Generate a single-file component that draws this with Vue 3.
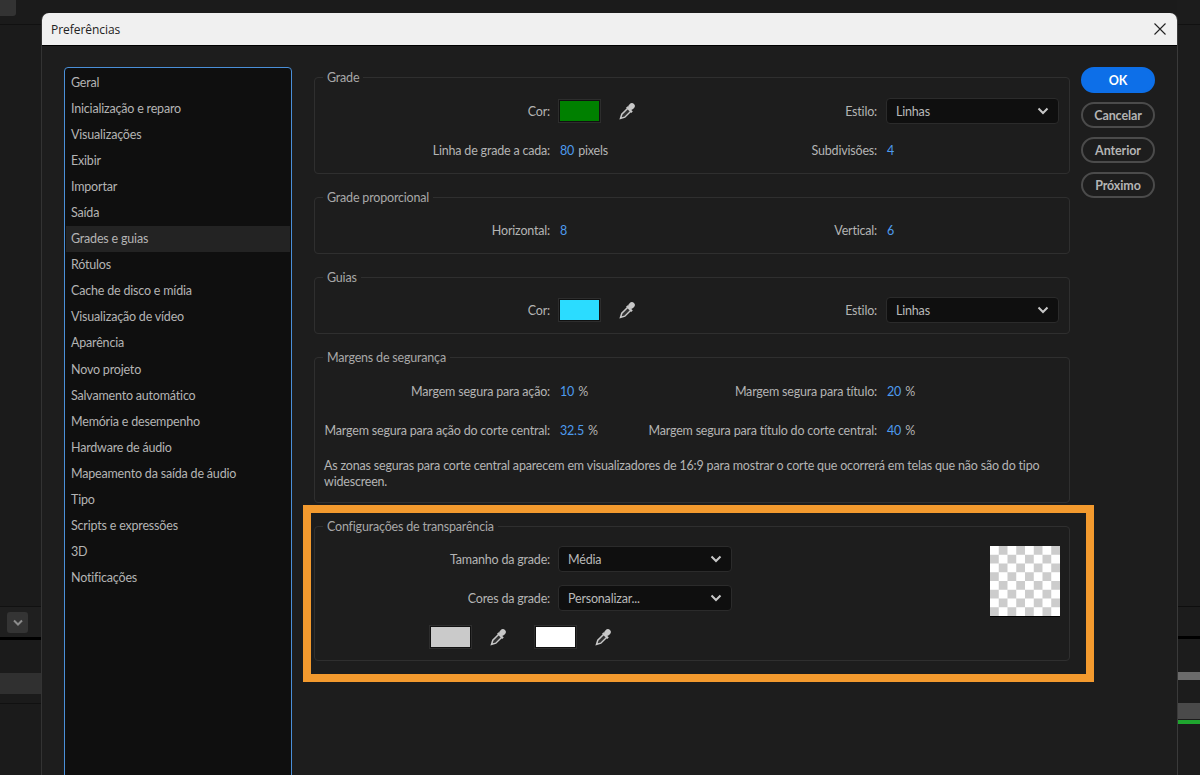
<script setup>
const navItems = ['Geral','Inicialização e reparo','Visualizações','Exibir','Importar','Saída','Grades e guias','Rótulos','Cache de disco e mídia','Visualização de vídeo','Aparência','Novo projeto','Salvamento automático','Memória e desempenho','Hardware de áudio','Mapeamento da saída de áudio','Tipo','Scripts e expressões','3D','Notificações']
const buttons = ['Cancelar','Anterior','Próximo']
</script>

<template>
  <div class="stage">
    <div class="bg-left">
      <div class="bg-corner"></div>
      <div class="bg-line-top"></div>
      <div class="bg-bar"><span class="bg-chevron"><svg width="12" height="8" viewBox="0 0 12 8"><path d="M2 1.500 6 5.500 10 1.500" fill="none" stroke="#8c8c8c" stroke-width="2"/></svg></span></div>
      <div class="bg-band"></div>
      <div class="bg-rule"></div>
    </div>
    <div class="bg-right">
      <div class="bg-line-top"></div>
      <div class="r-line"></div>
      <div class="r-black"></div>
      <div class="r-gray"></div>
      <div class="r-gray2"></div>
      <div class="r-green"></div>
    </div>

    <div class="dialog">
      <header class="titlebar">
        <span class="title">Preferências</span>
        <svg class="close" width="12" height="12" viewBox="0 0 12 12"><path d="M.5.5l11 11M11.5.5l-11 11" stroke="#222" stroke-width="1.1" fill="none"/></svg>
      </header>

      <div class="body">
        <nav class="nav">
          <div v-for="item in navItems" :key="item" class="nav-item" :class="{ selected: item === 'Grades e guias' }">{{ item }}</div>
        </nav>

        <main class="main">
          <section class="group g-grade">
            <h3 class="legend">Grade</h3>
            <div class="row row-a">
              <label class="lbl">Cor:</label>
              <div class="ctrl">
                <span class="swatch green"></span>
                <svg class="drop" width="16" height="18" viewBox="0 0 16 18"><path d="M8.800 6.200 2.800 12.200 1.500 16.500 5.800 15.200 11.800 9.200" fill="#333" stroke="#c8c8c8" stroke-width="1.500"/><path d="M7.800 5 13 10.200" stroke="#c8c8c8" stroke-width="2.200"/><ellipse cx="12.500" cy="4.500" rx="3" ry="3.500" transform="rotate(45 12.500 4.500)" fill="#c8c8c8"/></svg>
              </div>
              <label class="lbl">Estilo:</label>
              <div class="select"><span>Linhas</span><svg width="12" height="8" viewBox="0 0 12 8"><path d="M1.500 1.500 6 6l4.500-4.500" fill="none" stroke="#c8c8c8" stroke-width="2"/></svg></div>
            </div>
            <div class="row row-b">
              <label class="lbl">Linha de grade a cada:</label>
              <div class="ctrl val"><b>80</b> pixels</div>
              <label class="lbl">Subdivisões:</label>
              <div class="ctrl val"><b>4</b></div>
            </div>
          </section>

          <section class="group g-prop">
            <h3 class="legend">Grade proporcional</h3>
            <div class="row">
              <label class="lbl">Horizontal:</label>
              <div class="ctrl val"><b>8</b></div>
              <label class="lbl">Vertical:</label>
              <div class="ctrl val"><b>6</b></div>
            </div>
          </section>

          <section class="group g-guias">
            <h3 class="legend">Guias</h3>
            <div class="row">
              <label class="lbl">Cor:</label>
              <div class="ctrl">
                <span class="swatch cyan"></span>
                <svg class="drop" width="16" height="18" viewBox="0 0 16 18"><path d="M8.800 6.200 2.800 12.200 1.500 16.500 5.800 15.200 11.800 9.200" fill="#333" stroke="#c8c8c8" stroke-width="1.500"/><path d="M7.800 5 13 10.200" stroke="#c8c8c8" stroke-width="2.200"/><ellipse cx="12.500" cy="4.500" rx="3" ry="3.500" transform="rotate(45 12.500 4.500)" fill="#c8c8c8"/></svg>
              </div>
              <label class="lbl">Estilo:</label>
              <div class="select"><span>Linhas</span><svg width="12" height="8" viewBox="0 0 12 8"><path d="M1.500 1.500 6 6l4.500-4.500" fill="none" stroke="#c8c8c8" stroke-width="2"/></svg></div>
            </div>
          </section>

          <section class="group g-marg">
            <h3 class="legend">Margens de segurança</h3>
            <div class="row row-m1">
              <label class="lbl">Margem segura para ação:</label>
              <div class="ctrl val"><b>10</b> %</div>
              <label class="lbl">Margem segura para título:</label>
              <div class="ctrl val"><b>20</b> %</div>
            </div>
            <div class="row row-m2">
              <label class="lbl">Margem segura para ação do corte central:</label>
              <div class="ctrl val"><b>32.5</b> %</div>
              <label class="lbl">Margem segura para título do corte central:</label>
              <div class="ctrl val"><b>40</b> %</div>
            </div>
            <p class="note">As zonas seguras para corte central aparecem em visualizadores de 16:9 para mostrar o corte que ocorrerá em telas que não são do tipo widescreen.</p>
          </section>

          <section class="group g-trans">
            <h3 class="legend">Configurações de transparência</h3>
            <div class="trans-grid">
              <div class="trans-fields">
                <div class="t-row">
                  <label class="lbl">Tamanho da grade:</label>
                  <div class="select"><span>Média</span><svg width="12" height="8" viewBox="0 0 12 8"><path d="M1.500 1.500 6 6l4.500-4.500" fill="none" stroke="#c8c8c8" stroke-width="2"/></svg></div>
                </div>
                <div class="t-row">
                  <label class="lbl">Cores da grade:</label>
                  <div class="select"><span>Personalizar...</span><svg width="12" height="8" viewBox="0 0 12 8"><path d="M1.500 1.500 6 6l4.500-4.500" fill="none" stroke="#c8c8c8" stroke-width="2"/></svg></div>
                </div>
                <div class="t-swatches">
                  <span class="swatch light"></span>
                  <svg class="drop" width="16" height="18" viewBox="0 0 16 18"><path d="M8.800 6.200 2.800 12.200 1.500 16.500 5.800 15.200 11.800 9.200" fill="#333" stroke="#c8c8c8" stroke-width="1.500"/><path d="M7.800 5 13 10.200" stroke="#c8c8c8" stroke-width="2.200"/><ellipse cx="12.500" cy="4.500" rx="3" ry="3.500" transform="rotate(45 12.500 4.500)" fill="#c8c8c8"/></svg>
                  <span class="swatch white"></span>
                  <svg class="drop" width="16" height="18" viewBox="0 0 16 18"><path d="M8.800 6.200 2.800 12.200 1.500 16.500 5.800 15.200 11.800 9.200" fill="#333" stroke="#c8c8c8" stroke-width="1.500"/><path d="M7.800 5 13 10.200" stroke="#c8c8c8" stroke-width="2.200"/><ellipse cx="12.500" cy="4.500" rx="3" ry="3.500" transform="rotate(45 12.500 4.500)" fill="#c8c8c8"/></svg>
                </div>
              </div>
              <div class="checker"></div>
            </div>
          </section>

          <div class="highlight"></div>
        </main>

        <aside class="actions">
          <button class="btn primary">OK</button>
          <button v-for="b in buttons" :key="b" class="btn">{{ b }}</button>
        </aside>
      </div>
    </div>
  </div>
</template>

<style>
html, body { margin: 0; background: #1b1b1b; }
</style>

<style scoped>
.stage {
  position: relative;
  width: 1200px;
  height: 775px;
  overflow: hidden;
  box-sizing: border-box;
  padding: 13px 23px 0 42px;
  background: #1b1b1b;
  font-family: Lato, "Open Sans", sans-serif;
  font-size: 12.5px;
  letter-spacing: -0.19px;
  color: #b4b4b4;
}
.bg-left, .bg-right { position: absolute; top: 0; bottom: 0; }
.bg-left { left: 0; width: 42px; }
.bg-right { right: 0; width: 23px; background: #1c1c1c; }
.bg-corner { position: absolute; left: 0; top: 0; width: 16px; height: 16px; background: #333; border-radius: 0 0 3px 0; }
.bg-line-top { position: absolute; left: 0; right: 0; top: 24px; height: 1px; background: #111; }
.bg-bar { position: absolute; left: 0; right: 0; top: 606px; height: 30px; background: #1f1f1f; border-top: 1px solid #111; border-bottom: 3px solid #000; }
.bg-chevron { position: absolute; left: 7px; top: 5px; width: 21px; height: 21px; display: flex; align-items: center; justify-content: center; background: #343434; border-radius: 3px; }
.bg-band { position: absolute; left: 0; right: 0; top: 673px; height: 21px; background: #303030; }
.bg-rule { position: absolute; left: 0; right: 0; top: 703px; height: 1px; background: #111; }
.r-line { position: absolute; left: 0; right: 0; top: 606px; height: 1px; background: #0e0e0e; }
.r-black { position: absolute; left: 0; right: 0; top: 636px; height: 3px; background: #000; }
.r-gray { position: absolute; left: 0; right: 0; top: 672px; height: 8px; background: #6b6b6b; }
.r-gray2 { position: absolute; left: 0; right: 0; top: 703px; height: 16px; background: #4a4a4a; }
.r-green { position: absolute; left: 0; right: 0; top: 720px; height: 4px; background: #1fa52f; }

.dialog {
  position: relative;
  height: 100%;
  display: flex;
  flex-direction: column;
  background: #1d1d1d;
  box-shadow: 1px 0 0 #3a3a3a, -1px 0 0 #333;
  border-radius: 7px 7px 0 0;
}
.titlebar {
  flex: none;
  height: 33px;
  display: flex;
  align-items: center;
  justify-content: space-between;
  padding: 0 11px 0 9px;
  background: #f0f0f0;
  border-radius: 7px 7px 0 0;
  border-bottom: 1px solid #000;
  box-sizing: border-box;
}
.title { font-family: "Open Sans", sans-serif; font-size: 12px; letter-spacing: -0.05px; color: #222; }
.body {
  flex: 1;
  min-height: 0;
  display: flex;
  align-items: flex-start;
  padding: 21px 0 0 22px;
}
.nav {
  flex: none;
  width: 228px;
  height: 720px;
  box-sizing: border-box;
  padding-top: 2px;
  background: #0f0f0f;
  border: 1px solid #4a8fd8;
  border-radius: 4px 4px 0 0;
}
.nav-item {
  height: 26.05px;
  line-height: 26px;
  padding-left: 5px;
  margin: 0 1px;
  white-space: nowrap;
}
.nav-item.selected { background: #232323; }

.main {
  position: relative;
  flex: none;
  width: 756px;
  margin: 10px 0 0 22px;
  display: flex;
  flex-direction: column;
  gap: 23px;
}
.group {
  position: relative;
  box-sizing: border-box;
  border: 1px solid #2f2f2f;
  border-radius: 4px;
}
.legend {
  position: absolute;
  left: 8px;
  top: -8px;
  margin: 0;
  padding: 0 4px;
  background: #1d1d1d;
  font-size: 12.5px;
  line-height: 16px;
  font-weight: 400;
  color: #a8a8a8;
}
.g-grade { height: 97px; padding-top: 20px; }
.g-prop { height: 57px; padding-top: 20px; }
.g-guias { height: 57px; padding-top: 19px; }
.g-marg { height: 146px; padding-top: 21px; }
.g-trans { height: 135px; }

.row {
  display: grid;
  grid-template-columns: 235px 141px 168px 173px;
  column-gap: 9px;
  align-items: center;
  height: 25px;
  line-height: 25px;
}
.row-b { margin-top: 15px; }
.row-m2 { margin-top: 14px; }
.lbl { display: flex; justify-content: flex-end; white-space: nowrap; }
.ctrl { display: flex; align-items: center; white-space: nowrap; }
.val { display: block; padding-left: 1px; }
.val b { font-weight: 400; color: #4d9bee; margin-right: 1px; }
.swatch {
  display: inline-block;
  flex: none;
  width: 39px;
  height: 20px;
  border: 1px solid #111;
  outline: 1px solid #2d2d2d;
}
.green { background: #008000; }
.cyan { background: #2bdcff; }
.light { background: #cacaca; }
.white { background: #fff; }
.drop { flex: none; margin-left: 19px; }
.select {
  box-sizing: border-box;
  height: 26px;
  display: flex;
  align-items: center;
  justify-content: space-between;
  padding: 0 9px;
  background: #0f0f0f;
  border: 1px solid #2b2b2b;
  border-radius: 4px;
  color: #b9b9b9;
}
.note {
  margin: 15px 10px 0 9px;
  font-size: 12.5px;
  line-height: 16px;
}
.trans-grid {
  display: flex;
  justify-content: space-between;
  padding: 19px 9px 0 0;
}
.trans-fields { width: 417px; }
.t-row {
  display: grid;
  grid-template-columns: 235px 174px;
  column-gap: 8px;
  align-items: center;
  margin-bottom: 13px;
}
.t-swatches {
  display: flex;
  align-items: center;
  padding-left: 115px;
  margin-top: 15px;
}
.t-swatches .drop + .swatch { margin-left: 29px; }
.checker {
  flex: none;
  width: 70px;
  height: 70px;
  background: repeating-conic-gradient(#ccc 0 25%, #fff 0 50%) 0 0 / 17.5px 17.5px;
  box-shadow: 0 1px 0 #000;
}
.highlight {
  position: absolute;
  left: -11px;
  top: 428px;
  width: 791px;
  height: 177px;
  box-sizing: border-box;
  border: 8px solid #f39a2e;
  pointer-events: none;
}
.actions {
  flex: none;
  width: 74px;
  margin-left: 11px;
  display: flex;
  flex-direction: column;
  gap: 9px;
}
.btn {
  box-sizing: border-box;
  width: 74px;
  height: 26px;
  padding: 0;
  border: 2px solid #4b4b4b;
  border-radius: 13px;
  background: transparent;
  color: #b4b4b4;
  font: 700 12.5px Lato, "Open Sans", sans-serif;
  letter-spacing: -0.1px;
}
.btn.primary {
  border-color: #0d6fe8;
  background: #0d6fe8;
  color: #fff;
}
</style>
